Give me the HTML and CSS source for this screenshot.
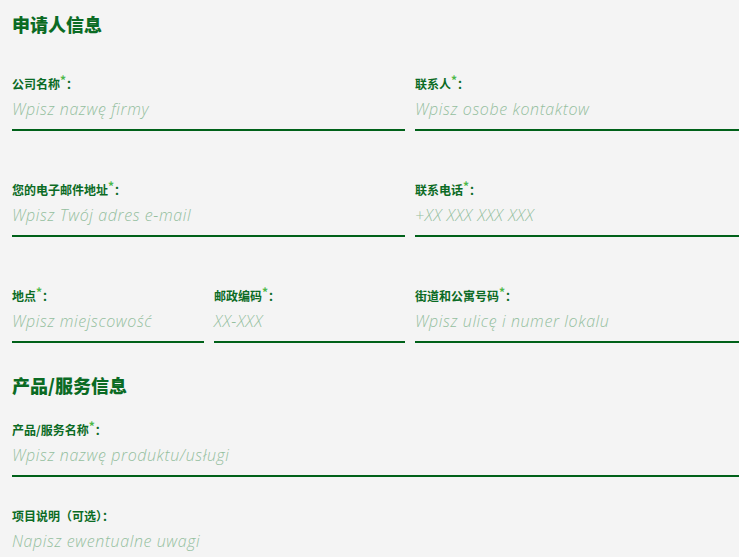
FILE: index.html
```html
<!DOCTYPE html>
<html lang="zh">
<head>
<meta charset="utf-8">
<link rel="stylesheet" href="styles.css">
</head>
<body>
<div class="page">
  <h2 class="section-title">申请人信息</h2>
  <div class="grid">
    <div class="field span2"><label class="label">公司名称<span class="req">*</span>：</label><div class="input">Wpisz nazwę firmy</div></div>
    <div class="field"><label class="label">联系人<span class="req">*</span>：</label><div class="input">Wpisz osobe kontaktow</div></div>

    <div class="field span2"><label class="label">您的电子邮件地址<span class="req">*</span>：</label><div class="input">Wpisz Twój adres e-mail</div></div>
    <div class="field"><label class="label">联系电话<span class="req">*</span>：</label><div class="input">+XX XXX XXX XXX</div></div>

    <div class="field"><label class="label">地点<span class="req">*</span>：</label><div class="input">Wpisz miejscowość</div></div>
    <div class="field"><label class="label">邮政编码<span class="req">*</span>：</label><div class="input">XX-XXX</div></div>
    <div class="field"><label class="label">街道和公寓号码<span class="req">*</span>：</label><div class="input">Wpisz ulicę i numer lokalu</div></div>
  </div>

  <h2 class="section-title second">产品/服务信息</h2>
  <div class="field full"><label class="label">产品/服务名称<span class="req">*</span>：</label><div class="input">Wpisz nazwę produktu/usługi</div></div>
  <div class="field full noline"><label class="label">项目说明（可选）：</label><div class="input">Napisz ewentualne uwagi</div></div>
</div>
</body>
</html>
```
FILE: styles.css
```css
html, body {
  margin: 0;
  padding: 0;
  background: #f4f4f4;
  overflow: hidden;
}
.page {
  padding-left: 12px;
  font-family: "Noto Sans CJK SC", "Noto Sans", sans-serif;
  color: #0b6b24;
}
.section-title {
  margin: 0;
  padding-top: 11px;
  font-size: 18px;
  line-height: 26px;
  font-weight: 900;
  color: #0b6b24;
}
.section-title.second {
  padding-top: 29px;
}
.grid {
  display: grid;
  grid-template-columns: 192px 191px 1fr;
  column-gap: 10px;
  row-gap: 51px;
  margin-top: 39px;
}
.span2 {
  grid-column: span 2;
}
.field {
  display: flex;
  flex-direction: column;
  border-bottom: 2px solid #006119;
  height: 55px;
  box-sizing: border-box;
}
.field.full {
  margin-top: 24px;
}
.field.noline {
  border-bottom: none;
  margin-top: 31px;
}
.label {
  font-size: 12px;
  line-height: 16px;
  font-weight: 700;
  color: #0b6b24;
  white-space: nowrap;
}
.req {
  color: #4cb848;
  position: relative;
  top: -4px;
  font-size: 12px;
}
.input {
  margin-top: 6px;
  font-family: "Open Sans", sans-serif;
  font-style: italic;
  font-weight: 300;
  font-size: 16px;
  letter-spacing: 0.6px;
  line-height: 22px;
  color: #95bf9f;
  white-space: nowrap;
}
```
